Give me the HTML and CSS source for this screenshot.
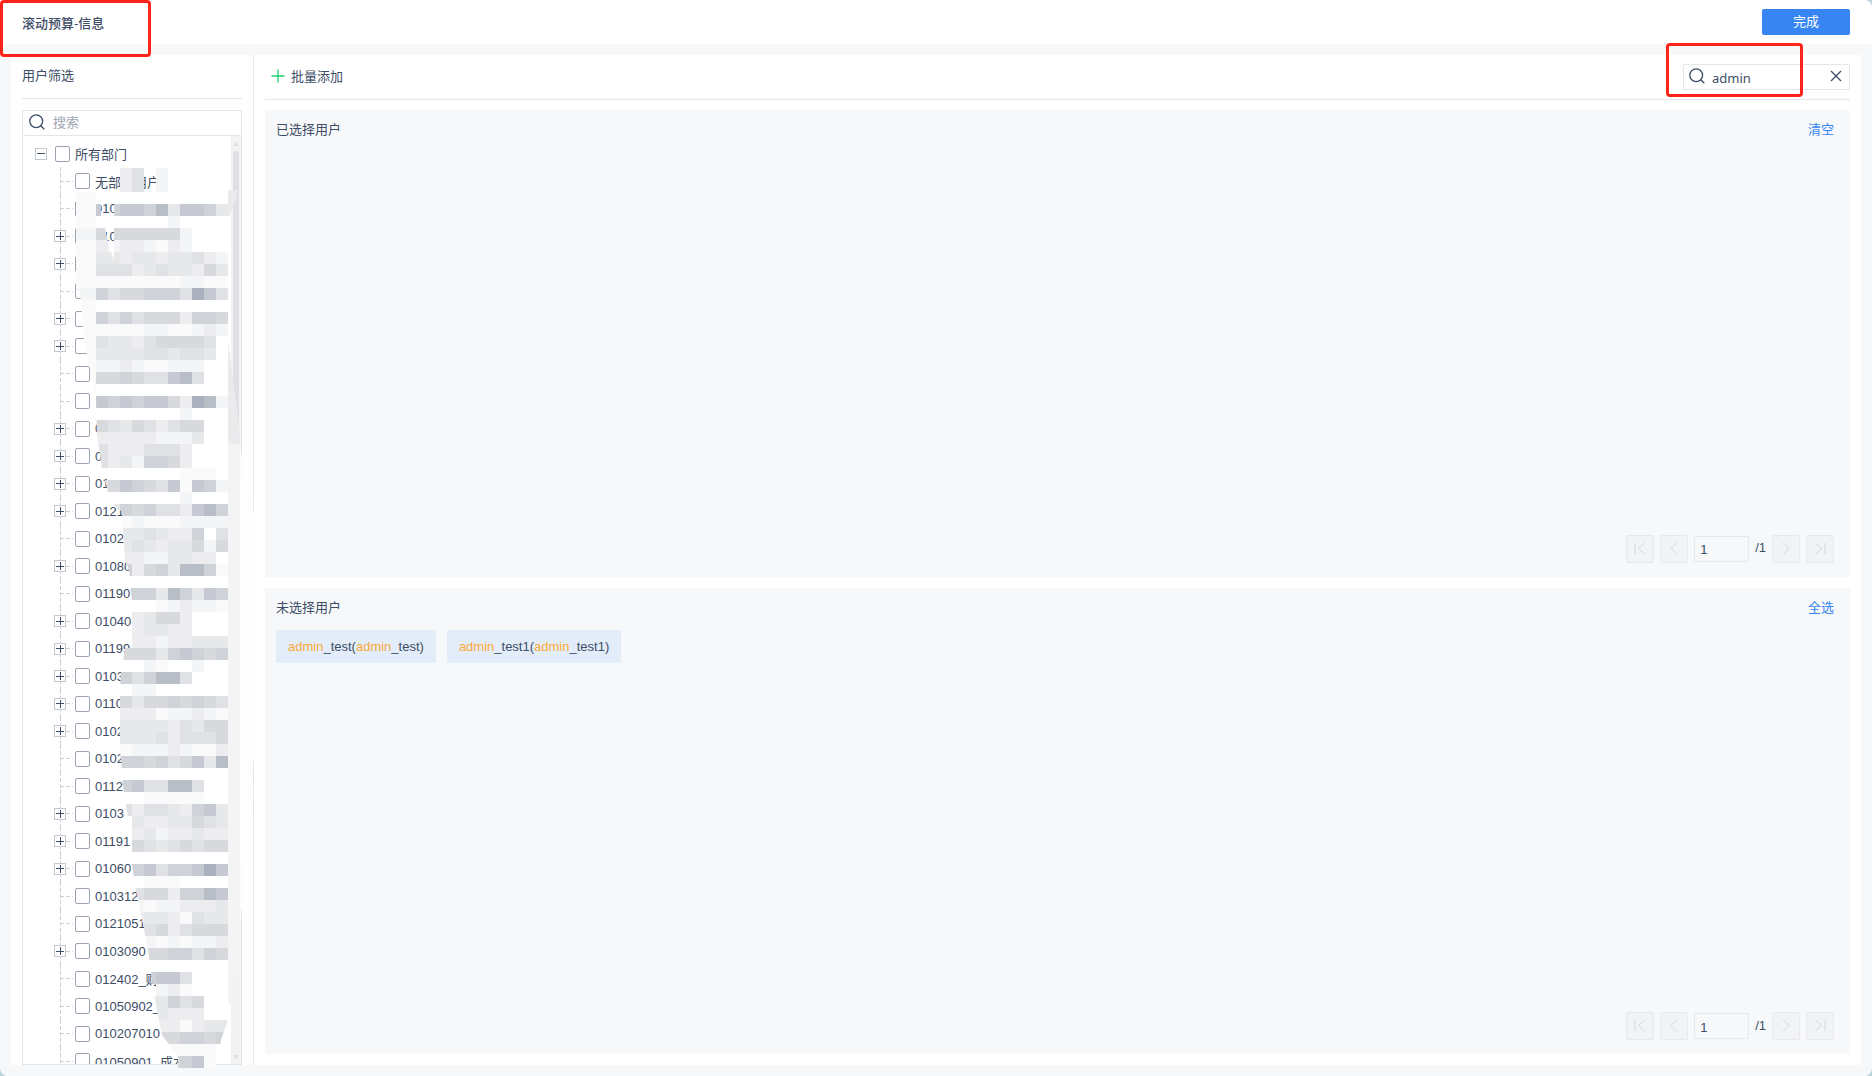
FILE: index.html
```html
<!DOCTYPE html>
<html lang="zh-CN">
<head>
    <meta charset="UTF-8">
    <meta name="viewport" content="width=device-width, initial-scale=1.0">
    <title>滚动预算-信息</title>
    <link rel="stylesheet" href="styles.css">
</head>
<body>
    <div class="app">
        <header class="titlebar">
            <h1>滚动预算-信息</h1>
            <button type="button" class="done">完成</button>
        </header>

        <main class="content">
            <aside class="sidebar">
                <h2>用户筛选</h2>
                <div class="search">
                    <svg width="16" height="16" viewBox="0 0 16 16"><circle cx="7.2" cy="7.2" r="6.4"/><path d="M11.7 11.7L15.3 15.3"/></svg>
                    <input type="text" placeholder="搜索" aria-label="搜索部门">
                </div>
                <div class="tree-box">
                    <ul class="tree" id="tree"></ul>
                    <div class="scrollbar">
                        <span class="arrow up"></span>
                        <span class="thumb"></span>
                        <span class="arrow down"></span>
                    </div>
                </div>
            </aside>

            <div class="users">
                <div class="toolbar">
                    <button type="button" class="batch-add">
                        <svg width="14" height="14" viewBox="0 0 14 14"><path d="M7 0.5V13.5M0.5 7H13.5"/></svg>
                        批量添加
                    </button>
                    <div class="search user-search">
                        <svg width="16" height="16" viewBox="0 0 16 16"><circle cx="7.2" cy="7.2" r="6.4"/><path d="M11.7 11.7L15.3 15.3"/></svg>
                        <input type="text" value="admin" aria-label="搜索用户">
                        <button type="button" class="clear" aria-label="清除">
                            <svg width="12" height="12" viewBox="0 0 12 12"><path d="M1 1L11 11M11 1L1 11"/></svg>
                        </button>
                    </div>
                </div>

                <section class="panel">
                    <div class="panel-head">
                        <h2>已选择用户</h2>
                        <a href="#">清空</a>
                    </div>
                    <div class="chips"></div>
                    <div class="pager">
                        <button type="button" disabled aria-label="首页"><svg width="12" height="14" viewBox="0 0 12 14"><path d="M1 1V12M10.5 1L4.5 6.5L10.5 12"/></svg></button>
                        <button type="button" disabled aria-label="上一页"><svg width="12" height="14" viewBox="0 0 12 14"><path d="M9 0.5L3 6.5L9 12.5"/></svg></button>
                        <input type="text" value="1" aria-label="页码">
                        <span>/1</span>
                        <button type="button" disabled aria-label="下一页"><svg width="12" height="14" viewBox="0 0 12 14"><path d="M3 0.5L9 6.5L3 12.5"/></svg></button>
                        <button type="button" disabled aria-label="末页"><svg width="12" height="14" viewBox="0 0 12 14"><path d="M11 1V12M1.5 1L7.5 6.5L1.5 12"/></svg></button>
                    </div>
                </section>

                <section class="panel">
                    <div class="panel-head">
                        <h2>未选择用户</h2>
                        <a href="#">全选</a>
                    </div>
                    <div class="chips">
                        <button type="button" class="chip"><mark>admin</mark>_test(<mark>admin</mark>_test)</button>
                        <button type="button" class="chip"><mark>admin</mark>_test1(<mark>admin</mark>_test1)</button>
                    </div>
                    <div class="pager">
                        <button type="button" disabled aria-label="首页"><svg width="12" height="14" viewBox="0 0 12 14"><path d="M1 1V12M10.5 1L4.5 6.5L10.5 12"/></svg></button>
                        <button type="button" disabled aria-label="上一页"><svg width="12" height="14" viewBox="0 0 12 14"><path d="M9 0.5L3 6.5L9 12.5"/></svg></button>
                        <input type="text" value="1" aria-label="页码">
                        <span>/1</span>
                        <button type="button" disabled aria-label="下一页"><svg width="12" height="14" viewBox="0 0 12 14"><path d="M3 0.5L9 6.5L3 12.5"/></svg></button>
                        <button type="button" disabled aria-label="末页"><svg width="12" height="14" viewBox="0 0 12 14"><path d="M11 1V12M1.5 1L7.5 6.5L1.5 12"/></svg></button>
                    </div>
                </section>
            </div>
        </main>
    </div>

    <!-- pixelated cover over the department names -->
    <svg class="mosaic" width="264" height="1076" viewBox="0 0 264 1076" shape-rendering="crispEdges">
        <defs>
            <clipPath id="brush">
                <path clip-rule="evenodd" d="M76 168V290L80 292L84 340L90 370L96 400L97 435L102 468L108 492L113 504L122 512L125 560L129 570L132 600L130 612L124 655L121 672L119 700V745L121 760L123 785L126 805L130 830L132 865L136 890L141 915L148 950L151 972L153 990L162 1035L178 1056V1068H216L221 1040L228 1020V168ZM101 200H114V260L109 246L105 228L101 216Z"/>
            </clipPath>
        </defs>
        <path fill="#ebebed" d="M228 190H237L236 200L230 216H228ZM228 340L240 432V445H228Z"/>
        <path fill="#f4f4f5" d="M228 444H240V925L231 1005H228Z"/>
        <path fill="#fdfdfd" d="M240 446L246 480L255 517V742L246 860L240 925Z"/>
        <g id="tiles" clip-path="url(#brush)"></g>
    </svg>

    <div class="callout callout-title"></div>
    <div class="callout callout-search"></div>

    <script src="script.js"></script>
</body>
</html>
```

FILE: styles.css
```css
* {
    box-sizing: border-box;
}
body {
    margin: 0;
    background: #b9d5d8;
    color: #3d4d66;
    font-family: "Liberation Sans", "Noto Sans CJK SC", sans-serif;
    font-size: 13px;
}
h1, h2 {
    margin: 0;
    font-size: 13px;
    font-weight: normal;
}
button, input {
    font: inherit;
    color: inherit;
}
svg {
    fill: none;
    stroke: currentColor;
    flex: none;
}
.app {
    display: flex;
    flex-direction: column;
    height: 100vh;
    background: #f7f8fa;
    border-radius: 0 8px 8px 8px;
    overflow: hidden;
}
.titlebar {
    display: flex;
    flex: none;
    align-items: center;
    justify-content: space-between;
    height: 44px;
    padding: 0 22px;
    background: #fff;
}
.titlebar h1 {
    font-weight: 500;
}
.done {
    width: 88px;
    height: 26px;
    padding: 0 0 3px;
    border: 0;
    border-radius: 2px;
    background: #3685f2;
    color: #fff;
}
.content {
    display: flex;
    flex: 1;
    min-height: 0;
    margin: 11px;
    background: #fff;
}

/* left column */
.sidebar {
    display: flex;
    flex: none;
    flex-direction: column;
    width: 243px;
    padding: 0 11px;
    border-right: 1px solid #e5e6ea;
}
.sidebar h2 {
    flex: none;
    height: 44px;
    line-height: 42px;
    margin-bottom: 11px;
    border-bottom: 1px solid #e5e6ea;
}
.search {
    display: flex;
    flex: none;
    align-items: center;
    gap: 7px;
    height: 26px;
    padding: 0 6px;
    border: 1px solid #e5e6ea;
    border-radius: 2px;
    background: #fff;
}
.search svg {
    margin-bottom: 2px;
    stroke-width: 1.3;
}
.search input {
    flex: 1;
    min-width: 0;
    padding: 0 1px 2px;
    border: 0;
    outline: none;
    background: none;
}
.search input::placeholder {
    color: #a2a8b4;
}
.tree-box {
    display: flex;
    flex: 1;
    min-height: 0;
    border: 1px solid #e5e6ea;
    border-top: 0;
}
.tree {
    flex: 1;
    margin: 0;
    padding: 4px 0 0 12px;
    list-style: none;
    overflow: hidden;
    white-space: nowrap;
}
.tree li {
    display: flex;
    align-items: center;
    height: 27px;
}
.tree li:nth-child(even) {
    height: 28px;
}
.tree label {
    display: flex;
    align-items: center;
    gap: 5px;
}
.tree input {
    appearance: none;
    flex: none;
    width: 15px;
    height: 16px;
    margin: 0;
    border: 1px solid #9ba3b1;
    border-radius: 2px;
    background: #fff;
}
.toggle {
    width: 12px;
    height: 12px;
    padding: 0;
    border: 1px solid #c3c7d0;
    background: linear-gradient(#3d4d66, #3d4d66) center / 8px 1px no-repeat, #fff;
}
.plus {
    background: linear-gradient(#3d4d66, #3d4d66) center / 8px 1px no-repeat,
        linear-gradient(#3d4d66, #3d4d66) center / 1px 8px no-repeat, #fff;
}
.root .toggle {
    margin-right: 8px;
}
.branch {
    display: flex;
    align-items: center;
    align-self: stretch;
    width: 21px;
    margin-left: 19px;
    background: repeating-linear-gradient(#cdd0d7 0 4px, transparent 4px 6px) 6px 0 / 1px 100% no-repeat,
        repeating-linear-gradient(90deg, #cdd0d7 0 4px, transparent 4px 6px) 6px 50% / 13px 1px no-repeat;
}
.scrollbar {
    display: flex;
    flex: none;
    flex-direction: column;
    align-items: center;
    width: 10px;
    padding: 6px 0 5px;
    background: #f3f3f4;
}
.arrow {
    border: 3px solid transparent;
}
.up {
    border-top: 0;
    border-bottom: 4px solid #dfe0e4;
}
.down {
    margin-top: auto;
    border-bottom: 0;
    border-top: 4px solid #dfe0e4;
}
.thumb {
    width: 6px;
    height: 31%;
    margin-top: 5px;
    border-radius: 3px;
    background: #dfe0e4;
}

/* right column */
.users {
    display: flex;
    flex: 1;
    flex-direction: column;
    gap: 11px;
    min-width: 0;
    padding: 0 11px 11px;
}
.toolbar {
    display: flex;
    flex: none;
    align-items: center;
    justify-content: space-between;
    height: 45px;
    margin-bottom: -1px;
    border-bottom: 1px solid #e5e6ea;
}
.batch-add {
    display: flex;
    align-items: center;
    gap: 6px;
    padding: 0 6px 3px;
    border: 0;
    background: none;
}
.batch-add svg {
    color: #1fd06c;
    stroke-width: 1.3;
}
.user-search {
    width: 167px;
    gap: 6px;
    padding: 0 5px;
}
.user-search input {
    padding: 2px 1px 0;
    font-family: "Noto Sans", sans-serif;
}
.clear {
    display: flex;
    padding: 0 2px;
    border: 0;
    background: none;
}
.panel {
    display: flex;
    flex: 1;
    flex-direction: column;
    min-height: 0;
    padding: 0 16px 14px 11px;
    background: #f7f8fa;
}
.panel-head {
    display: flex;
    justify-content: space-between;
    margin-bottom: 2px;
    line-height: 40px;
}
.panel-head a {
    color: #3685f2;
    text-decoration: none;
}
.chips {
    display: flex;
    flex: 1;
    align-items: flex-start;
    gap: 11px;
}
.chip {
    height: 33px;
    padding: 0 12px;
    border: 0;
    border-radius: 2px;
    background: #e3edfa;
}
.chip mark {
    background: none;
    color: #faa937;
}
.pager {
    display: flex;
    align-items: center;
    justify-content: flex-end;
    gap: 6px;
}
.pager button {
    display: flex;
    align-items: center;
    justify-content: center;
    width: 28px;
    height: 28px;
    padding: 0;
    border: 1px solid #e7e8ec;
    border-radius: 2px;
    background: #f2f3f7;
    color: #d3d6dc;
}
.pager input {
    width: 55px;
    height: 26px;
    padding: 2px 5px 0;
    border: 1px solid #e7e8ec;
    border-radius: 2px;
    background: none;
}
.pager span {
    padding-bottom: 2px;
}

/* overlays */
.mosaic {
    position: absolute;
    top: 0;
    left: 0;
    stroke: none;
    pointer-events: none;
}
.callout {
    position: absolute;
    border: 3px solid #ff2419;
    border-radius: 4px;
    pointer-events: none;
}
.callout-title {
    top: 0;
    left: 0;
    width: 151px;
    height: 57px;
}
.callout-search {
    top: 43px;
    right: 69px;
    width: 137px;
    height: 54px;
}
```

FILE: script.js
```js
// "+" marks a department that has children
const departments = [
    '无部门用户', '010', '+010', '+', '', '+', '+', '', '', '+0', '+0', '+01', '+0121',
    '0102', '+01080', '01190', '+01040', '+01199', '+0103', '+0110', '+0102', '0102',
    '0112', '+0103', '+01191', '+01060', '010312', '0121051', '+0103090', '012402_财',
    '01050902_', '010207010', '01050901_成本'
];

function addRow(name, isRoot, hasChildren) {
    const row = document.createElement('li');
    const toggle = hasChildren
        ? `<button type="button" class="toggle ${isRoot ? '' : 'plus'}" aria-label="展开"></button>`
        : '';
    row.className = isRoot ? 'root' : '';
    row.innerHTML = (isRoot ? toggle : `<span class="branch">${toggle}</span>`)
        + `<label><input type="checkbox">${name}</label>`;
    document.getElementById('tree').appendChild(row);
}

addRow('所有部门', true, true);
departments.forEach(function(item) {
    addRow(item.replace('+', ''), false, item.startsWith('+'));
});

// One string per 12px line from y = 168, one shade per 12px tile from x = 72
const shades = {
    1: '#fafafb', 2: '#f4f5f6', 3: '#ededf0', 4: '#e6e8ea', 5: '#dfe1e4',
    6: '#d7d9dc', 7: '#cfd2d7', 8: '#c6c9d1', 9: '#b9bdc6', a: '#aab0bd'
};
const lines = [
    '0000350200000', '0000350200000', '1100000000000', '1187887948874', '1100000020000',
    '2266666662000', '1132332132000', '1144344344532', '1155534544364', '1111111112211',
    '2275667775a85', '1100000000000', '1175756663776', '1111112211232', '1154435666650',
    '1144445545540', '1122321122200', '1166765589500', '1100000000000', '1187878863a92',
    '0000000002000', '0065465356600', '0033333222400', '0053335553000', '0053427763000',
    '0000000001110', '0056876581872', '0000000002000', '0004767553897', '0001121112222',
    '0000445433705', '0000454344626', '0000332244330', '0000736749971', '0000000000000',
    '0008877497487', '0000000123221', '0000034663000', '0000034433000', '0000033233444',
    '0000666478767', '0000002100200', '0000757995000', '0000022000000', '0000646676765',
    '0000333122321', '0000444435466', '0000444535556', '0000122232113', '0000776756849',
    '0000000000000', '0000785599500', '0000001111100', '0000535543784', '0000043344654',
    '0000034233433', '0000065456566', '0000000000000', '00000785778a8', '0000001110000',
    '0000056637798', '0000021223334', '0000034431544', '0000005635666', '0000002121223',
    '0000006677576', '0000000000000', '0000007885000', '0000000231000', '0000003475600',
    '0000000433300', '0000000331344', '0000000667767', '0000000011110', '0000000067810'
];

let tiles = '';
lines.forEach(function(line, y) {
    for (let x = 0; x < line.length; x++) {
        if (line[x] !== '0') {
            tiles += `<rect x="${72 + x * 12}" y="${168 + y * 12}" width="12" height="12" fill="${shades[line[x]]}"/>`;
        }
    }
});
document.getElementById('tiles').innerHTML = tiles;
```
